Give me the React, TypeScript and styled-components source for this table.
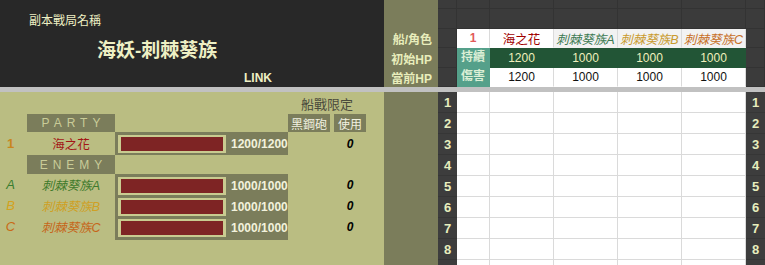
import styled, { createGlobalStyle } from 'styled-components';

const GlobalStyle = createGlobalStyle`
  html, body {
    margin: 0;
    padding: 0;
    background: #ffffff;
  }
  body {
    font-family: "Liberation Sans", "Noto Sans CJK TC", sans-serif;
  }
`;

const OLIVE_LIGHT = '#babd82';
const OLIVE_DARK = '#7b7d5b';
const INK_LIGHT = '#e8edbb';

type Tone = 'green' | 'gold' | 'orange' | 'red';

const toneColor: Record<Tone, string> = {
  green: '#3f7a2c',
  gold: '#cfa024',
  orange: '#c6661a',
  red: '#a31616',
};

const headTone: Record<Tone, string> = {
  green: '#3d7a52',
  gold: '#c99a2e',
  orange: '#c76f26',
  red: '#a00000',
};

const Sheet = styled.div`
  display: grid;
  grid-template-columns: 384px 54px 327px;
  grid-template-rows: 87px 5px 173px;
  width: 765px;
  height: 265px;
  overflow: hidden;
`;

/* ---------- top band ---------- */

const TitleBlock = styled.div`
  display: grid;
  grid-template-rows: 9px 20px 39px 19px;
  background: #282828;
  color: #eef0c4;
`;

const TitleRow = styled.div<{ $indent: number; $row: number }>`
  grid-row: ${({ $row }) => $row};
  display: flex;
  align-items: center;
  padding-left: ${({ $indent }) => $indent}px;
`;

const SmallCaption = styled.span`
  font-size: 12px;
`;

const BigTitle = styled.span`
  font-size: 19px;
  font-weight: 700;
`;

const LinkText = styled.span`
  font-size: 12px;
  font-weight: 700;
`;

const LabelColumn = styled.div`
  display: grid;
  grid-template-rows: 29px 19px 20px 19px;
  background: ${OLIVE_DARK};
`;

const SideLabel = styled.div`
  display: flex;
  align-items: center;
  justify-content: flex-end;
  padding-right: 6px;
  font-size: 12px;
  font-weight: 700;
  color: ${INK_LIGHT};
`;

const TopTable = styled.div`
  display: grid;
  grid-template-columns: 19px 33px repeat(4, 64px) 19px;
  grid-template-rows: 9px 20px 19px 20px 19px;
  background: #3b3b3b;
`;

type CellKind = 'dark' | 'white' | 'gray' | 'green' | 'teal';

const cellBg: Record<CellKind, string> = {
  dark: '#3b3b3b',
  white: '#ffffff',
  gray: '#f2f2f2',
  green: '#225536',
  teal: '#55a08a',
};

const TopCell = styled.div<{ $kind: CellKind; $span?: number }>`
  display: flex;
  align-items: center;
  justify-content: center;
  background: ${({ $kind }) => cellBg[$kind]};
  grid-row: ${({ $span }) => ($span ? `span ${$span}` : 'auto')};
  border-right: 1px solid
    ${({ $kind }) => ($kind === 'dark' ? '#333333' : $kind === 'green' ? '#225536' : $kind === 'teal' ? '#55a08a' : '#dadada')};
  border-bottom: 1px solid ${({ $kind }) => ($kind === 'dark' ? '#333333' : 'transparent')};
  box-sizing: border-box;
  font-size: 12px;
  color: ${({ $kind }) => ($kind === 'green' ? '#f0f0bc' : '#111111')};
`;

const IndexMark = styled.span`
  color: #e25a5a;
  font-weight: 700;
  font-size: 12px;
`;

const HeadName = styled.span<{ $tone: Tone; $italic?: boolean }>`
  color: ${({ $tone }) => headTone[$tone]};
  font-style: ${({ $italic }) => ($italic ? 'italic' : 'normal')};
  font-size: 12.5px;
  white-space: nowrap;
`;

const TealText = styled.span`
  display: flex;
  flex-direction: column;
  align-items: center;
  line-height: 19px;
  font-size: 12px;
  font-weight: 700;
  color: #dcefd6;
`;

const Divider = styled.div`
  grid-column: 1 / -1;
  background: #c1c1c1;
`;

/* ---------- lower left panel ---------- */

const Panel = styled.div`
  display: grid;
  grid-template-columns: 27px 88px 173px 42px 4px 32px 18px;
  grid-template-rows: 22px 18px 23px 19px 21px 21px 21px 3px 1fr;
  background: ${OLIVE_LIGHT};
`;

const Place = styled.div<{ $col: string; $row: string }>`
  grid-column: ${({ $col }) => $col};
  grid-row: ${({ $row }) => $row};
  display: flex;
  align-items: center;
  justify-content: center;
  min-width: 0;
`;

const LimitCaption = styled.span`
  font-size: 13px;
  color: #4b4b3d;
`;

const SectionBar = styled.div`
  display: flex;
  align-items: center;
  justify-content: center;
  width: 100%;
  height: 100%;
  background: ${OLIVE_DARK};
  color: #c9cc98;
  font-size: 12px;
  letter-spacing: 5px;
  padding-left: 5px;
  box-sizing: border-box;
`;

const TagBox = styled.div`
  display: flex;
  align-items: center;
  justify-content: center;
  width: 100%;
  height: 100%;
  background: ${OLIVE_DARK};
  color: #f1f1e0;
  font-size: 12px;
`;

const RowIndex = styled.span<{ $tone: Tone; $italic?: boolean }>`
  color: ${({ $tone }) => ($tone === 'gold' ? '#d3a21e' : $tone === 'orange' ? '#c96a16' : $tone === 'green' ? '#3a7d30' : '#c9861e')};
  font-style: ${({ $italic }) => ($italic ? 'italic' : 'normal')};
  font-weight: ${({ $italic }) => ($italic ? 400 : 700)};
  font-size: 13px;
  padding-right: 6px;
`;

const UnitName = styled.span<{ $tone: Tone; $italic?: boolean }>`
  color: ${({ $tone }) => toneColor[$tone]};
  font-style: ${({ $italic }) => ($italic ? 'italic' : 'normal')};
  font-size: 12.5px;
  white-space: nowrap;
`;

const HpCell = styled.div<{ $row: string }>`
  grid-column: 3;
  grid-row: ${({ $row }) => $row};
  display: flex;
  align-items: flex-start;
  gap: 5px;
  padding: 3px 0 0 3px;
  background: ${OLIVE_DARK};
  box-sizing: border-box;
`;

const HpBar = styled.div`
  width: 108px;
  height: 18px;
  box-sizing: border-box;
  border: 2px solid #c9cb90;
  border-left-width: 3px;
  border-right-width: 3px;
  background: #7e2424;
`;

const HpText = styled.span`
  line-height: 18px;
  font-size: 12px;
  font-weight: 700;
  color: #f2f2dc;
`;

const UseCount = styled.span`
  font-size: 12px;
  font-weight: 700;
  font-style: italic;
  color: #000000;
`;

/* ---------- lower right table ---------- */

const OliveColumn = styled.div`
  background: ${OLIVE_DARK};
`;

const BodyTable = styled.div`
  display: grid;
  grid-template-columns: 19px 33px repeat(4, 64px) 19px;
  grid-auto-rows: 21px;
  align-content: start;
  background: #ffffff;
`;

const NumCell = styled.div`
  display: flex;
  align-items: center;
  justify-content: center;
  background: #3d3d3d;
  border-bottom: 1px solid #363636;
  box-sizing: border-box;
  color: #e7eebd;
  font-size: 13px;
  font-weight: 700;
`;

const BlankCell = styled.div`
  background: #ffffff;
  border-right: 1px solid #dadada;
  border-bottom: 1px solid #dadada;
  box-sizing: border-box;
`;

const enemies: { key: string; tone: Tone }[] = [
  { key: 'A', tone: 'green' },
  { key: 'B', tone: 'gold' },
  { key: 'C', tone: 'orange' },
];

const rows = [1, 2, 3, 4, 5, 6, 7, 8, 9];

export default function App() {
  return (
    <>
      <GlobalStyle />
      <Sheet>
        <TitleBlock>
          <TitleRow $row={2} $indent={29}>
            <SmallCaption>副本戰局名稱</SmallCaption>
          </TitleRow>
          <TitleRow $row={3} $indent={97}>
            <BigTitle>海妖-刺棘葵族</BigTitle>
          </TitleRow>
          <TitleRow $row={4} $indent={244}>
            <LinkText>LINK</LinkText>
          </TitleRow>
        </TitleBlock>

        <LabelColumn>
          <div />
          <SideLabel>船/角色</SideLabel>
          <SideLabel>初始HP</SideLabel>
          <SideLabel>當前HP</SideLabel>
        </LabelColumn>

        <TopTable>
          {Array.from({ length: 14 }).map((_, i) => (
            <TopCell key={`d${i}`} $kind="dark" />
          ))}
          <TopCell $kind="dark" />
          <TopCell $kind="white">
            <IndexMark>1</IndexMark>
          </TopCell>
          <TopCell $kind="white">
            <HeadName $tone="red">海之花</HeadName>
          </TopCell>
          {enemies.map((e) => (
            <TopCell key={e.key} $kind="gray">
              <HeadName $tone={e.tone} $italic>
                刺棘葵族{e.key}
              </HeadName>
            </TopCell>
          ))}
          <TopCell $kind="dark" />

          <TopCell $kind="dark" />
          <TopCell $kind="teal" $span={2}>
            <TealText>
              <span>持續</span>
              <span>傷害</span>
            </TealText>
          </TopCell>
          <TopCell $kind="green">1200</TopCell>
          <TopCell $kind="green">1000</TopCell>
          <TopCell $kind="green">1000</TopCell>
          <TopCell $kind="green">1000</TopCell>
          <TopCell $kind="dark" />

          <TopCell $kind="dark" />
          <TopCell $kind="white">1200</TopCell>
          <TopCell $kind="white">1000</TopCell>
          <TopCell $kind="white">1000</TopCell>
          <TopCell $kind="white">1000</TopCell>
          <TopCell $kind="dark" />
        </TopTable>

        <Divider />

        <Panel>
          <Place $col="4 / 7" $row="1">
            <LimitCaption>船戰限定</LimitCaption>
          </Place>

          <Place $col="2" $row="2">
            <SectionBar>PARTY</SectionBar>
          </Place>
          <Place $col="4" $row="2">
            <TagBox>黑鋼砲</TagBox>
          </Place>
          <Place $col="6" $row="2">
            <TagBox>使用</TagBox>
          </Place>

          <Place $col="1" $row="3">
            <RowIndex $tone="red">1</RowIndex>
          </Place>
          <Place $col="2" $row="3">
            <UnitName $tone="red">海之花</UnitName>
          </Place>
          <HpCell $row="3">
            <HpBar />
            <HpText>1200/1200</HpText>
          </HpCell>
          <Place $col="6" $row="3">
            <UseCount>0</UseCount>
          </Place>

          <Place $col="2" $row="4">
            <SectionBar>ENEMY</SectionBar>
          </Place>

          {enemies.map((e, i) => (
            <Row key={e.key} row={5 + i} tone={e.tone} letter={e.key} />
          ))}
          <HpCell $row="8" />
        </Panel>

        <OliveColumn />

        <BodyTable>
          {rows.map((n) => (
            <BodyRow key={n} n={n} />
          ))}
        </BodyTable>
      </Sheet>
    </>
  );
}

function Row({ row, tone, letter }: { row: number; tone: Tone; letter: string }) {
  const r = String(row);
  return (
    <>
      <Place $col="1" $row={r}>
        <RowIndex $tone={tone} $italic>
          {letter}
        </RowIndex>
      </Place>
      <Place $col="2" $row={r}>
        <UnitName $tone={tone} $italic>
          刺棘葵族{letter}
        </UnitName>
      </Place>
      <HpCell $row={r}>
        <HpBar />
        <HpText>1000/1000</HpText>
      </HpCell>
      <Place $col="6" $row={r}>
        <UseCount>0</UseCount>
      </Place>
    </>
  );
}

function BodyRow({ n }: { n: number }) {
  return (
    <>
      <NumCell>{n}</NumCell>
      <BlankCell />
      <BlankCell />
      <BlankCell />
      <BlankCell />
      <BlankCell />
      <NumCell>{n}</NumCell>
    </>
  );
}
